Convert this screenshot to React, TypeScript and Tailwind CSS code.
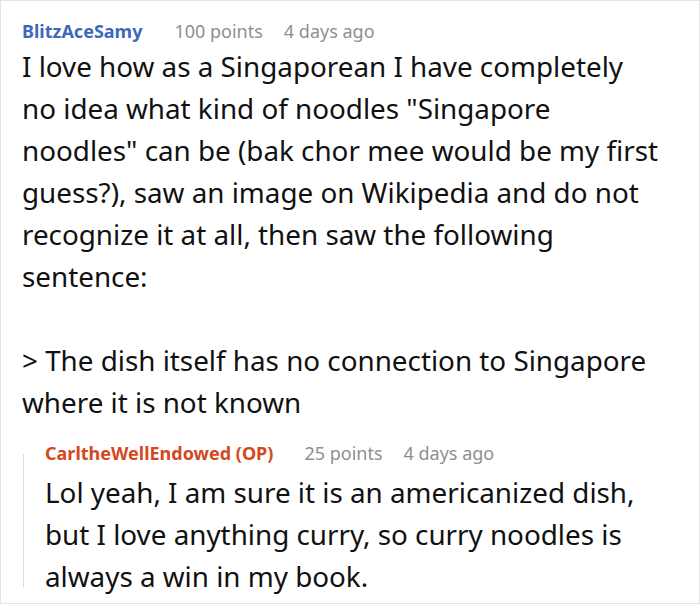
import React from 'react'

const bodyFont = { fontFamily: '"Noto Sans", "Open Sans", sans-serif' }

const App = () => {
  return (
    <div style={bodyFont} className='w-[700px] h-[604px] bg-white border border-[#e3e3e3] overflow-hidden'>
      {/* top comment */}
      <div className='pl-[21px] pr-4 pt-[17px]'>
        <div className='flex items-center text-[18px] leading-[26px]'>
          <span className='font-bold text-[#3c6ab8]'>BlitzAceSamy</span>
          <span className='text-[#8f8f8f] ml-[32px]'>100 points</span>
          <span className='text-[#8f8f8f] ml-[21px]'>4 days ago</span>
        </div>
        <div className='text-[27.8px] leading-[42px] text-[#111] mt-[1px]'>
          <p>I love how as a Singaporean I have completely</p>
          <p>no idea what kind of noodles "Singapore</p>
          <p>noodles" can be (bak chor mee would be my first</p>
          <p>guess?), saw an image on Wikipedia and do not</p>
          <p>recognize it at all, then saw the following</p>
          <p>sentence:</p>
          <p>&nbsp;</p>
          <p>&gt; The dish itself has no connection to Singapore</p>
          <p>where it is not known</p>
        </div>
      </div>

      {/* reply */}
      <div className='flex ml-[22px] mt-[17px]'>
        <div className='w-px bg-[#dcdcdc] mt-[14px] mb-[10px] shrink-0' />
        <div className='pl-[21px]'>
          <div className='flex items-center text-[18px] leading-[26px]'>
            <span className='font-bold text-[#d2491f]'>CarltheWellEndowed (OP)</span>
            <span className='text-[#8f8f8f] ml-[31px]'>25 points</span>
            <span className='text-[#8f8f8f] ml-[21px]'>4 days ago</span>
          </div>
          <div className='text-[27.8px] leading-[42px] text-[#111] mt-[5px]'>
            <p>Lol yeah, I am sure it is an americanized dish,</p>
            <p>but I love anything curry, so curry noodles is</p>
            <p>always a win in my book.</p>
          </div>
        </div>
      </div>
    </div>
  )
}

export default App
